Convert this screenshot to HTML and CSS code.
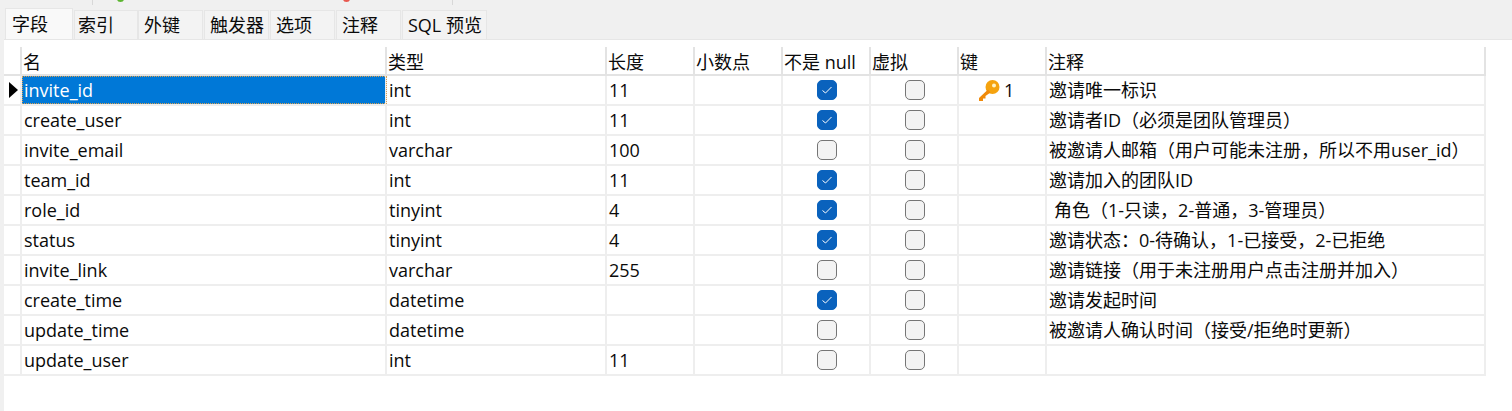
FILE: index.html
```html
<!DOCTYPE html>
<html lang="zh">
<head>
<meta charset="utf-8">
<title>字段</title>
<link rel="stylesheet" href="styles.css">
</head>
<body>
<div class="topstrip">
  <span class="tick t1"></span><span class="dot green"></span><span class="dot red"></span><span class="tick t2"></span>
</div>
<nav class="tabs">
  <div class="tab active">字段</div>
  <div class="tab">索引</div>
  <div class="tab w66">外键</div>
  <div class="tab w66">触发器</div>
  <div class="tab w66">选项</div>
  <div class="tab w66">注释</div>
  <div class="tab w85">SQL 预览</div>
</nav>
<main class="pane">
  <div class="grid">
    <div class="row head">
      <div class="gutter"></div><div class="c">名</div><div class="c">类型</div><div class="c">长度</div><div class="c">小数点</div><div class="c">不是 null</div><div class="c">虚拟</div><div class="c">键</div><div class="c last">注释</div>
    </div>
    <div class="row">
      <div class="gutter"><svg class="arrow" width="9" height="16" viewBox="0 0 9 16"><path d="M0 0 L9 8 L0 16Z" fill="#000"/></svg></div><div class="c sel">invite_id</div><div class="c">int</div><div class="c">11</div><div class="c"></div><div class="c mid"><span class="cb on"><svg width="12" height="10" viewBox="0 0 12 10"><path d="M1.5 5.5 L4.5 8 L10.5 2" fill="none" stroke="#fff" stroke-width="1"/></svg></span></div><div class="c mid"><span class="cb"></span></div><div class="c keyc"><svg width="24" height="22" viewBox="0 0 24 22"><circle cx="15.5" cy="8" r="7" fill="#f5a30f"/><path d="M11 10.500 L2 19 L2 22 L6 22 L6 19.500 L8.500 19.500 L8.500 17 L13.500 13.500Z" fill="#f08a0a"/><circle cx="17" cy="6.500" r="2" fill="#fff3c8"/></svg><span>1</span></div><div class="c last">邀请唯一标识</div>
    </div>
    <div class="row">
      <div class="gutter"></div><div class="c">create_user</div><div class="c">int</div><div class="c">11</div><div class="c"></div><div class="c mid"><span class="cb on"><svg width="12" height="10" viewBox="0 0 12 10"><path d="M1.5 5.500 L4.500 8 L10.500 2" fill="none" stroke="#fff" stroke-width="1"/></svg></span></div><div class="c mid"><span class="cb"></span></div><div class="c"></div><div class="c last">邀请者ID（必须是团队管理员）</div>
    </div>
    <div class="row">
      <div class="gutter"></div><div class="c">invite_email</div><div class="c">varchar</div><div class="c">100</div><div class="c"></div><div class="c mid"><span class="cb"></span></div><div class="c mid"><span class="cb"></span></div><div class="c"></div><div class="c last">被邀请人邮箱（用户可能未注册，所以不用user_id）</div>
    </div>
    <div class="row">
      <div class="gutter"></div><div class="c">team_id</div><div class="c">int</div><div class="c">11</div><div class="c"></div><div class="c mid"><span class="cb on"><svg width="12" height="10" viewBox="0 0 12 10"><path d="M1.500 5.500 L4.500 8 L10.500 2" fill="none" stroke="#fff" stroke-width="1"/></svg></span></div><div class="c mid"><span class="cb"></span></div><div class="c"></div><div class="c last">邀请加入的团队ID</div>
    </div>
    <div class="row">
      <div class="gutter"></div><div class="c">role_id</div><div class="c">tinyint</div><div class="c">4</div><div class="c"></div><div class="c mid"><span class="cb on"><svg width="12" height="10" viewBox="0 0 12 10"><path d="M1.500 5.500 L4.500 8 L10.500 2" fill="none" stroke="#fff" stroke-width="1"/></svg></span></div><div class="c mid"><span class="cb"></span></div><div class="c"></div><div class="c last indent">角色（1-只读，2-普通，3-管理员）</div>
    </div>
    <div class="row">
      <div class="gutter"></div><div class="c">status</div><div class="c">tinyint</div><div class="c">4</div><div class="c"></div><div class="c mid"><span class="cb on"><svg width="12" height="10" viewBox="0 0 12 10"><path d="M1.500 5.500 L4.500 8 L10.500 2" fill="none" stroke="#fff" stroke-width="1"/></svg></span></div><div class="c mid"><span class="cb"></span></div><div class="c"></div><div class="c last">邀请状态：0-待确认，1-已接受，2-已拒绝</div>
    </div>
    <div class="row">
      <div class="gutter"></div><div class="c">invite_link</div><div class="c">varchar</div><div class="c">255</div><div class="c"></div><div class="c mid"><span class="cb"></span></div><div class="c mid"><span class="cb"></span></div><div class="c"></div><div class="c last">邀请链接（用于未注册用户点击注册并加入）</div>
    </div>
    <div class="row">
      <div class="gutter"></div><div class="c">create_time</div><div class="c">datetime</div><div class="c"></div><div class="c"></div><div class="c mid"><span class="cb on"><svg width="12" height="10" viewBox="0 0 12 10"><path d="M1.500 5.500 L4.500 8 L10.500 2" fill="none" stroke="#fff" stroke-width="1"/></svg></span></div><div class="c mid"><span class="cb"></span></div><div class="c"></div><div class="c last">邀请发起时间</div>
    </div>
    <div class="row">
      <div class="gutter"></div><div class="c">update_time</div><div class="c">datetime</div><div class="c"></div><div class="c"></div><div class="c mid"><span class="cb"></span></div><div class="c mid"><span class="cb"></span></div><div class="c"></div><div class="c last">被邀请人确认时间（接受/拒绝时更新）</div>
    </div>
    <div class="row">
      <div class="gutter"></div><div class="c">update_user</div><div class="c">int</div><div class="c">11</div><div class="c"></div><div class="c mid"><span class="cb"></span></div><div class="c mid"><span class="cb"></span></div><div class="c"></div><div class="c last"></div>
    </div>
  </div>
</main>
</body>
</html>
```
FILE: styles.css
```css
* { box-sizing: border-box; }
html, body { margin: 0; height: 100%; overflow: hidden; }
body {
  width: 1512px;
  height: 411px;
  background: #f0f0f0;
  color: #0a0a0a;
  font-family: "Open Sans", "Noto Sans CJK SC", sans-serif;
  font-size: 18px;
  display: flex;
  flex-direction: column;
}
.topstrip { height: 9px; position: relative; flex: none; }
.tick { position: absolute; top: 0; width: 1px; height: 5px; background: #d8d8d8; }
.t1 { left: 92px; }
.t2 { left: 452px; }
.dot { position: absolute; top: -4px; width: 7px; height: 6px; border-radius: 50%; }
.green { left: 117px; background: #5cb531; }
.red { left: 343px; background: #e8584f; }
.tabs { display: flex; height: 30px; padding-left: 5px; flex: none; align-items: flex-end; }
.tab {
  height: 29px;
  width: 64px;
  background: #f3f3f3;
  border: 1px solid #e6e6e6;
  border-bottom: 0;
  padding-left: 3px;
  line-height: 28px;
  white-space: nowrap;
}
.tab.active {
  width: 68px;
  height: 31px;
  margin-right: 1px;
  background: #f9f9f9;
  padding-left: 6px;
  line-height: 30px;
}
.w66 { width: 65px; margin-right: 1px; padding-left: 5px; }
.w85 { width: 85px; padding-left: 5px; }
.pane { flex: 1; margin-left: 4px; background: #fff; padding-top: 7px; border-top: 1px solid #e6e6e6; }
.grid { width: 1482px; }
.row {
  display: grid;
  grid-template-columns: 18px 365px 220px 88px 88px 88px 88px 88px 439px;
  height: 30px;
  border-bottom: 2px solid #eeeeee;
}
.row.head { height: 29px; border-bottom: 2px solid #e3e3e3; }
.gutter { border-right: 2px solid #eeeeee; position: relative; }
.head .gutter, .head .c { border-right-color: #e3e3e3; }
.arrow { position: absolute; left: 5px; top: 6px; }
.c {
  border-right: 2px solid #eeeeee;
  padding-left: 2px;
  line-height: 29px;
  white-space: nowrap;
  overflow: hidden;
}
.head .c { line-height: 31px; padding-left: 1px; }
.sel {
  background: #0078d7;
  color: #fff;
  outline: 1px dotted #d9a050;
  outline-offset: -1px;
  height: 28px;
}
.mid { display: flex; align-items: center; justify-content: center; padding: 0 0 0 2px; }
.cb {
  width: 20px;
  height: 20px;
  border-radius: 5px;
  border: 1px solid #757575;
  background: #f3f3f3;
  display: flex;
  align-items: center;
  justify-content: center;
}
.cb.on { background: #0a62bd; border-color: #0a62bd; }
.keyc { display: flex; align-items: center; padding-left: 18px; }
.keyc span { margin-left: 3px; }
.indent { padding-left: 7px; }
```
